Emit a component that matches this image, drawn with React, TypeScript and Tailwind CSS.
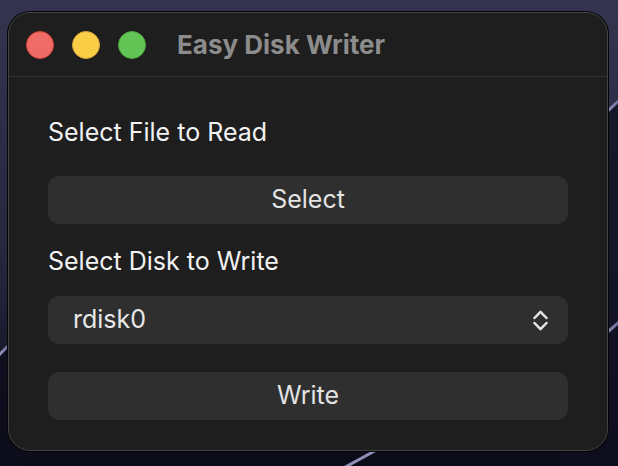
import React from "react";

function Wallpaper() {
  return (
    <svg className="absolute inset-0" width="618" height="466" viewBox="0 0 618 466">
      <defs>
        <linearGradient id="bg" x1="0" y1="0" x2="0" y2="1">
          <stop offset="0" stopColor="#34344f" />
          <stop offset="0.55" stopColor="#26263f" />
          <stop offset="1" stopColor="#0b0b18" />
        </linearGradient>
        <linearGradient id="streak" x1="0" y1="0" x2="1" y2="0">
          <stop offset="0" stopColor="#c8c8f0" stopOpacity="0.9" />
          <stop offset="1" stopColor="#8080c0" stopOpacity="0.6" />
        </linearGradient>
      </defs>
      <rect width="618" height="466" fill="url(#bg)" />
      <path d="M560 160 L640 80 L640 500 L560 500 Z" fill="#0e0e20" opacity="0.7" />
      <path d="M-20 372 L20 332 L20 500 L-20 500 Z" fill="#0c0c1c" opacity="0.8" />
      <line x1="596" y1="122" x2="626" y2="94" stroke="url(#streak)" strokeWidth="3" />
      <line x1="596" y1="342" x2="626" y2="316" stroke="url(#streak)" strokeWidth="3" />
      <line x1="-6" y1="360" x2="14" y2="340" stroke="url(#streak)" strokeWidth="3" />
      <line x1="340" y1="470" x2="380" y2="448" stroke="#b0b0e0" strokeWidth="3" opacity="0.8" />
    </svg>
  );
}

function Chevrons() {
  return (
    <svg width="15" height="21" viewBox="0 0 15 21" fill="none" stroke="#e6e6e6" strokeWidth="2.5" strokeLinecap="round" strokeLinejoin="round">
      <path d="M1.5 8 L7.5 1.8 L13.5 8" />
      <path d="M1.5 13 L7.5 19.2 L13.5 13" />
    </svg>
  );
}

export default function App() {
  return (
    <div
      className="relative w-[618px] h-[466px] overflow-hidden"
      style={{ fontFamily: "Inter, 'Noto Sans', sans-serif" }}
    >
      <Wallpaper />
      <div className="relative pt-[12px] pl-[8px]">
        <div className="w-[600px] h-[439px] rounded-[22px] bg-[#1e1e1e] border border-[#434343] shadow-[0_0_0_1px_#050508] overflow-hidden flex flex-col">
          <div className="h-[64px] flex items-center border-b border-[#343434] pl-[17px] shrink-0">
            <div className="flex gap-[18px]">
              <div className="w-[28px] h-[28px] rounded-full bg-[#ef6b68] border border-[#d6463f]" />
              <div className="w-[28px] h-[28px] rounded-full bg-[#f9cd45] border border-[#d9a83a]" />
              <div className="w-[28px] h-[28px] rounded-full bg-[#63c555] border border-[#4da63f]" />
            </div>
            <div className="ml-[31px] text-[26px] font-bold text-[#8c8c8c] leading-none">
              Easy Disk Writer
            </div>
          </div>
          <div className="flex flex-col px-[39px] pt-[39px]">
            <div className="h-[32px] leading-[32px] text-[25px] text-[#f2f2f2]">Select File to Read</div>
            <button className="mt-[28px] h-[48px] rounded-[11px] bg-[#2f2f2f] text-[25px] text-[#e3e3e3] flex items-center justify-center">
              Select
            </button>
            <div className="mt-[21px] h-[32px] leading-[32px] text-[25px] text-[#f2f2f2]">Select Disk to Write</div>
            <div className="mt-[19px] h-[48px] rounded-[11px] bg-[#2f2f2f] flex items-center justify-between pl-[25px] pr-[20px]">
              <span className="text-[25px] text-[#e8e8e8]">rdisk0</span>
              <Chevrons />
            </div>
            <button className="mt-[28px] h-[48px] rounded-[11px] bg-[#2f2f2f] text-[25px] text-[#e3e3e3] flex items-center justify-center">
              Write
            </button>
          </div>
        </div>
      </div>
    </div>
  );
}
